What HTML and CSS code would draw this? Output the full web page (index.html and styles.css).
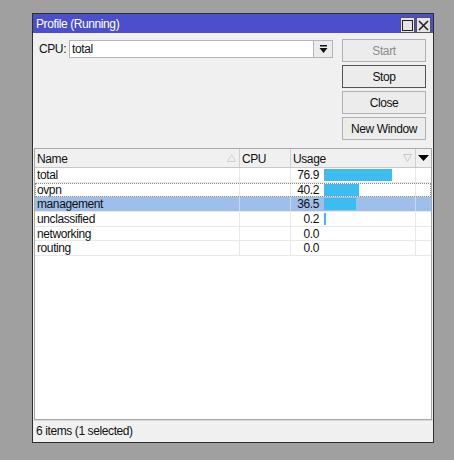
FILE: index.html
```html
<!DOCTYPE html>
<html lang="en">

<head>
    <meta charset="UTF-8">
    <meta name="viewport" content="width=device-width, initial-scale=1.0">
    <title>Profile (Running)</title>
    <link rel="stylesheet" href="styles.css">
</head>

<body>
    <div class="window">
        <div class="titlebar">
            <span class="title">Profile (Running)</span>
            <div class="title-btns">
                <span class="tbtn">
                    <svg width="13" height="13" viewBox="0 0 13 13">
                        <rect x="1.5" y="1.5" width="10" height="10" fill="none" stroke="#222" stroke-width="1"/>
                    </svg>
                </span>
                <span class="tbtn">
                    <svg width="13" height="13" viewBox="0 0 13 13">
                        <path d="M2 2 L11 11 M11 2 L2 11" stroke="#222" stroke-width="1.6"/>
                    </svg>
                </span>
            </div>
        </div>

        <div class="top">
            <div class="cpu-row">
                <span class="label">CPU:</span>
                <div class="select">
                    <span class="select-value">total</span>
                    <span class="select-btn">
                        <svg width="9" height="9" viewBox="0 0 9 9">
                            <rect x="1" y="0" width="7" height="1.5" fill="#111"/>
                            <path d="M0.5 3 L8.5 3 L4.5 8 Z" fill="#111"/>
                        </svg>
                    </span>
                </div>
            </div>
            <div class="buttons">
                <button class="btn disabled">Start</button>
                <button class="btn default">Stop</button>
                <button class="btn">Close</button>
                <button class="btn">New Window</button>
            </div>
        </div>

        <div class="grid">
            <div class="head">
                <div class="hcell">Name
                    <svg class="sort" width="9" height="8" viewBox="0 0 9 8">
                        <path d="M4.5 0.5 L8.5 7.5 L0.5 7.5 Z" fill="none" stroke="#d2d2d2"/>
                    </svg>
                </div>
                <div class="hcell">CPU</div>
                <div class="hcell">Usage
                    <svg class="sort" width="9" height="8" viewBox="0 0 9 8">
                        <path d="M0.5 0.5 L8.5 0.5 L4.5 7.5 Z" fill="none" stroke="#c8c8c8"/>
                    </svg>
                </div>
                <div class="hcell menu">
                    <svg width="11" height="6" viewBox="0 0 11 6">
                        <path d="M0 0 L11 0 L5.5 6 Z" fill="#000"/>
                    </svg>
                </div>
            </div>

            <div class="row">
                <div class="cell">total</div>
                <div class="cell"></div>
                <div class="cell usage"><span class="num">76.9</span><span class="bar" style="width: 68px"></span></div>
                <div class="cell"></div>
            </div>
            <div class="row focus">
                <div class="cell">ovpn</div>
                <div class="cell"></div>
                <div class="cell usage"><span class="num">40.2</span><span class="bar" style="width: 35px"></span></div>
                <div class="cell"></div>
            </div>
            <div class="row selected">
                <div class="cell">management</div>
                <div class="cell"></div>
                <div class="cell usage"><span class="num">36.5</span><span class="bar" style="width: 32px"></span></div>
                <div class="cell"></div>
            </div>
            <div class="row">
                <div class="cell">unclassified</div>
                <div class="cell"></div>
                <div class="cell usage"><span class="num">0.2</span><span class="bar" style="width: 2px"></span></div>
                <div class="cell"></div>
            </div>
            <div class="row">
                <div class="cell">networking</div>
                <div class="cell"></div>
                <div class="cell usage"><span class="num">0.0</span></div>
                <div class="cell"></div>
            </div>
            <div class="row">
                <div class="cell">routing</div>
                <div class="cell"></div>
                <div class="cell usage"><span class="num">0.0</span></div>
                <div class="cell"></div>
            </div>
        </div>

        <div class="status">6 items (1 selected)</div>
    </div>
</body>

</html>
```

FILE: styles.css
```css
* {
    margin: 0;
    padding: 0;
    box-sizing: border-box;
}

body {
    background: #a0a0a0;
    font-family: "Liberation Sans", Arial, sans-serif;
    font-size: 12px;
    letter-spacing: -0.4px;
    color: #111;
    padding: 13px 0 0 32px;
    height: 460px;
}

.window {
    width: 402px;
    height: 430px;
    border: 1px solid #2e2e2e;
    background: #f0f0f0;
    display: flex;
    flex-direction: column;
}

.titlebar {
    height: 19px;
    background: #4b4fcb;
    display: flex;
    align-items: center;
    justify-content: space-between;
    padding: 0 2px 0 3px;
}

.title {
    color: #fff;
    padding-top: 1px;
}

.title-btns {
    display: flex;
    gap: 1px;
    padding-top: 3px;
}

.tbtn {
    width: 15px;
    height: 16px;
    background: #e4e4e4;
    border: 1px solid #555;
    display: flex;
    align-items: center;
    justify-content: center;
}

.top {
    height: 115px;
    display: flex;
    justify-content: space-between;
    padding: 6px 7px 0 6px;
}

.cpu-row {
    display: flex;
    align-items: center;
    height: 18px;
    margin-top: 1px;
}

.label {
    width: 30px;
}

.select {
    display: flex;
    width: 264px;
    height: 18px;
    border: 1px solid #b5b5b5;
    background: #fff;
}

.select-value {
    flex: 1;
    padding: 1px 0 0 2px;
}

.select-btn {
    width: 19px;
    background: #ececec;
    border-left: 1px solid #b5b5b5;
    display: flex;
    align-items: center;
    justify-content: center;
}

.buttons {
    display: flex;
    flex-direction: column;
    gap: 3px;
}

.btn {
    width: 84px;
    height: 23px;
    border: 1px solid #b0b0b0;
    background: #ececec;
    font-family: inherit;
    font-size: 12px;
    letter-spacing: -0.4px;
    color: #111;
}

.btn.disabled {
    color: #8d8d8d;
}

.btn.default {
    border: 1px solid #555;
}

.grid {
    flex: 1;
    margin: 0 1px;
    border: 1px solid #a8a8a8;
    background: #fff;
}

.head,
.row {
    display: grid;
    grid-template-columns: 205px 51px 125px 1fr;
}

.head {
    height: 19px;
    background: #f0f0f0;
    border-bottom: 1px solid #c8c8c8;
}

.hcell {
    position: relative;
    padding: 3px 0 0 2px;
    border-right: 1px solid #d0d0d0;
}

.hcell.menu {
    border-right: 0;
    display: flex;
    align-items: center;
    justify-content: center;
    padding: 0;
}

.sort {
    position: absolute;
    right: 3px;
    top: 5px;
}

.row {
    height: 14.7px;
    border-bottom: 1px solid #e8e8e8;
}

.cell {
    padding: 1px 0 0 2px;
    line-height: 13px;
    border-right: 1px solid #e8e8e8;
    white-space: nowrap;
}

.cell:last-child {
    border-right: 0;
}

.row.focus {
    outline: 1px dotted #8a8a8a;
    outline-offset: -1px;
}

.row.selected {
    background: #9dbfe9;
}

.row.selected .cell {
    border-right-color: #c8d8ee;
}

.usage {
    display: flex;
    align-items: center;
    padding: 0;
}

.num {
    width: 28px;
    text-align: right;
    margin-right: 5px;
    padding-top: 1px;
}

.bar {
    height: 12px;
    background: #3dbcf0;
}

.status {
    height: 22px;
    border-top: 1px solid #d8d8d8;
    padding: 3px 0 0 3px;
}
```
